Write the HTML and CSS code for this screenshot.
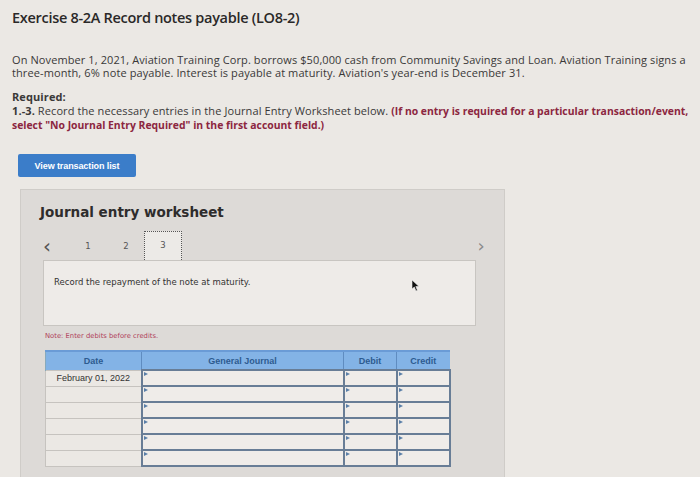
FILE: index.html
```html
<!DOCTYPE html>
<html lang="en">
<head>
    <meta charset="UTF-8">
    <title>Exercise 8-2A</title>
    <link rel="stylesheet" href="styles.css">
</head>
<body>

<h1 class="title">Exercise 8-2A Record notes payable (LO8-2)</h1>

<p class="intro">On November 1, 2021, Aviation Training Corp. borrows $50,000 cash from Community Savings and Loan. Aviation Training signs a three-month, 6% note payable. Interest is payable at maturity. Aviation's year-end is December 31.</p>

<div class="required">
    <b>Required:</b><br>
    <b>1.-3.</b> Record the necessary entries in the Journal Entry Worksheet below. <span class="red">(If no entry is required for a particular transaction/event,</span><br>
    <span class="red">select "No Journal Entry Required" in the first account field.)</span>
</div>

<button class="btn-list">View transaction list</button>

<div class="worksheet">
    <h2 class="ws-title">Journal entry worksheet</h2>

    <div class="ws-nav">
        <span class="arrow">&lsaquo;</span>
        <span class="step">1</span>
        <span class="step">2</span>
        <span class="step active">3</span>
        <span class="arrow next">&rsaquo;</span>
    </div>

    <div class="desc">
        Record the repayment of the note at maturity.
        <svg class="cursor" width="9" height="13" viewBox="0 0 9 13"><path d="M1 1 L1 10 L3.3 8 L5 12 L6.4 11.3 L4.8 7.5 L8 7.5 Z" fill="#111" stroke="#eee" stroke-width="0.6"/></svg>
    </div>

    <p class="note">Note: Enter debits before credits.</p>

    <table class="journal">
        <colgroup>
            <col class="c-date">
            <col class="c-acct">
            <col class="c-num">
            <col class="c-num">
        </colgroup>
        <thead>
            <tr>
                <th>Date</th>
                <th>General Journal</th>
                <th>Debit</th>
                <th>Credit</th>
            </tr>
        </thead>
        <tbody>
            <tr><td class="date">February 01, 2022</td><td class="in"></td><td class="in"></td><td class="in"></td></tr>
            <tr><td class="date"></td><td class="in"></td><td class="in"></td><td class="in"></td></tr>
            <tr><td class="date"></td><td class="in"></td><td class="in"></td><td class="in"></td></tr>
            <tr><td class="date"></td><td class="in"></td><td class="in"></td><td class="in"></td></tr>
            <tr><td class="date"></td><td class="in"></td><td class="in"></td><td class="in"></td></tr>
            <tr><td class="date"></td><td class="in"></td><td class="in"></td><td class="in"></td></tr>
        </tbody>
    </table>
</div>

</body>
</html>
```

FILE: styles.css
```css
body {
    margin: 0;
    padding: 8px 4px 0 12px;
    background-color: #ebe8e4;
    color: #2e2c2c;
    font-family: 'Open Sans', sans-serif;
    height: 477px;
    overflow: hidden;
    box-sizing: border-box;
}

.title {
    margin: 0;
    font-size: 14.5px;
    line-height: 20px;
    font-weight: 600;
    letter-spacing: -0.3px;
    color: #2a2828;
}

.intro {
    margin: 25px 0 0 0;
    padding-right: 8px;
    font-size: 11px;
    line-height: 13px;
    letter-spacing: 0.1px;
    color: #3a3838;
}

.required {
    margin-top: 11px;
    font-size: 11px;
    line-height: 14px;
    letter-spacing: 0.1px;
    color: #3a3838;
    white-space: nowrap;
}

.required b {
    font-weight: 700;
}

.red {
    color: #8c2640;
    font-weight: 700;
    font-size: 10.4px;
    letter-spacing: 0;
}

.btn-list {
    display: block;
    margin: 22px 0 0 6px;
    width: 118px;
    height: 23px;
    padding: 0;
    border: none;
    border-radius: 2px;
    background-color: #3b7dc9;
    color: #fff;
    font-family: 'Liberation Sans', Arial, sans-serif;
    font-size: 9px;
    font-weight: bold;
    letter-spacing: -0.1px;
}

.worksheet {
    margin: 12px 0 0 8px;
    width: 485px;
    height: 300px;
    box-sizing: border-box;
    padding: 13px 28px 0 22px;
    background-color: #dddad7;
    border: 1px solid #cfccc8;
}

.ws-title {
    margin: 0 0 0 -3px;
    font-family: 'DejaVu Sans', Verdana, sans-serif;
    font-size: 13.5px;
    line-height: 18px;
    font-weight: bold;
    color: #2e2c2c;
}

.ws-nav {
    display: flex;
    align-items: center;
    height: 29px;
    margin-top: 10px;
    font-family: 'DejaVu Sans', Verdana, sans-serif;
    font-size: 8.5px;
    color: #555;
}

.arrow {
    font-size: 20px;
    color: #555;
    width: 22px;
    text-align: center;
    margin-left: -7px;
    margin-right: 11px;
}

.arrow.next {
    margin-left: auto;
    margin-right: -16px;
    color: #8a8a8a;
    font-size: 18px;
}

.step {
    width: 38px;
    text-align: center;
}

.step.active {
    box-sizing: border-box;
    height: 29px;
    line-height: 26px;
    margin-left: -1px;
    border: 1px dotted #555;
    border-bottom: none;
    background-color: #eceae7;
}

.desc {
    position: relative;
    height: 66px;
    box-sizing: border-box;
    padding: 16px 10px;
    background-color: #eeebe8;
    border: 1px solid #c8c5c1;
    font-family: 'DejaVu Sans', Verdana, sans-serif;
    font-size: 8.5px;
    color: #333;
}

.cursor {
    position: absolute;
    left: 367px;
    top: 18px;
}

.note {
    margin: 5px 0 0 2px;
    font-family: 'DejaVu Sans', Verdana, sans-serif;
    font-size: 6.8px;
    line-height: 10px;
    color: #b0405a;
}

.journal {
    margin: 9px 0 0 2px;
    width: 405px;
    table-layout: fixed;
    border-collapse: collapse;
    font-family: 'Liberation Sans', Arial, sans-serif;
    font-size: 9px;
}

.c-date { width: 96px; }
.c-acct { width: 202px; }
.c-num { width: 53px; }

.journal th {
    height: 17px;
    padding: 0;
    background-color: #83b3e6;
    color: #2d5b90;
    font-weight: bold;
    border-left: 1px solid #5f8cc0;
    border-top: 2px solid #6a9bd6;
}

.journal th:first-child {
    border-left: 1px solid #8ab;
}

.journal td {
    height: 14px;
    padding: 0;
}

.journal td.date {
    background-color: #ebe8e4;
    border: 1px solid #c6c3bf;
    color: #333;
    text-align: center;
}

.journal td.in {
    position: relative;
    background-color: #efece9;
    border: 2px solid #687d96;
}

.journal td.in::before {
    content: '';
    position: absolute;
    left: 1px;
    top: 1px;
    border-left: 4px solid #5a7fa8;
    border-top: 2px solid transparent;
    border-bottom: 2px solid transparent;
}
```
